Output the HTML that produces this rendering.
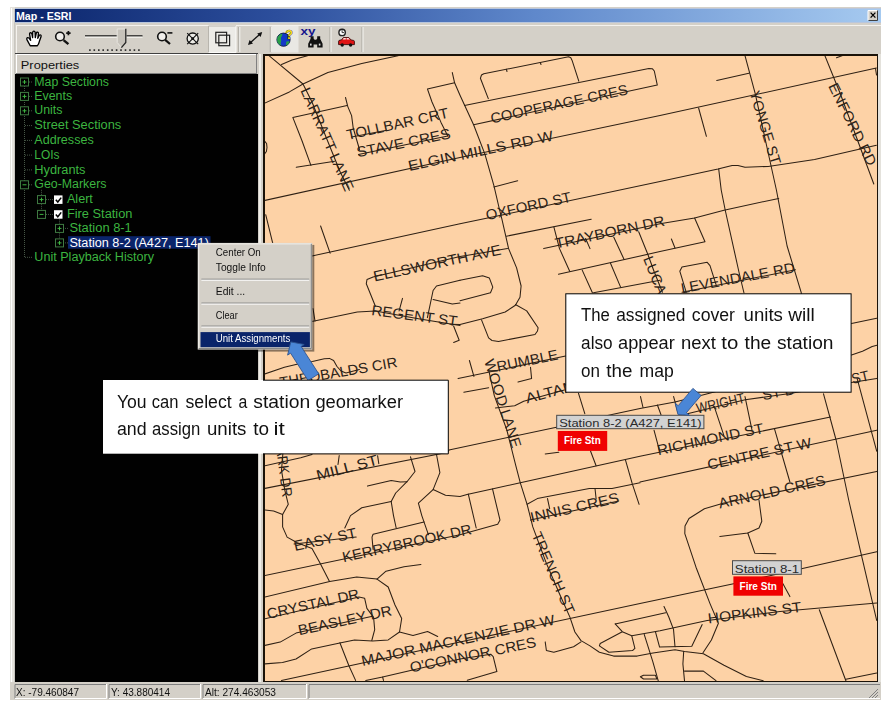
<!DOCTYPE html>
<html><head><meta charset="utf-8"><title>Map - ESRI</title>
<style>html,body{margin:0;padding:0;background:#fff;width:889px;height:707px;overflow:hidden}svg{display:block;position:absolute;left:0;top:0;will-change:opacity;opacity:.999}text{font-family:"Liberation Sans",sans-serif}.ml{font-size:14.5px;fill:#2b2218}.rd{fill:none;stroke:#2e2014;stroke-width:1.05;stroke-linejoin:round;stroke-linecap:round}</style></head><body>
<svg width="889" height="707" viewBox="0 0 889 707">
<rect x="10" y="7" width="871" height="693" fill="#d4d0c8"/>
<rect x="10" y="7" width="5" height="693" fill="#e4e2dc"/>
<rect x="11" y="8" width="1" height="691" fill="#ffffff"/>
<rect x="14" y="9" width="1" height="690" fill="#c8c6c0"/>
<defs><linearGradient id="tg" x1="0" x2="1" y1="0" y2="0"><stop offset="0" stop-color="#0a246a"/><stop offset="0.3" stop-color="#2c4e9c"/><stop offset="0.6" stop-color="#5f88cb"/><stop offset="1" stop-color="#a6caf0"/></linearGradient></defs>
<rect x="15" y="8" width="866" height="15" fill="#b9c6dc"/>
<rect x="15" y="9" width="866" height="13" fill="url(#tg)"/>
<text x="16.0" y="20.0" font-size="11" fill="#fff" font-weight="bold" textLength="55.5" lengthAdjust="spacingAndGlyphs" >Map - ESRI</text>
<rect x="868" y="10" width="10" height="10" fill="#d4d0c8"/>
<path d="M868 20.5V10.5H877.5" stroke="#fff" fill="none"/>
<path d="M868.5 20.5H877.5V10.5" stroke="#404040" fill="none"/>
<path d="M870.6 12.6L875.4 17.6M875.4 12.6L870.6 17.6" stroke="#000" stroke-width="1.3" fill="none"/>
<rect x="15" y="23" width="866" height="2" fill="#d4d0c8"/>
<rect x="16" y="25" width="865" height="1" fill="#f4f2ee"/>
<rect x="16" y="25" width="1" height="28" fill="#f4f2ee"/>
<g transform="translate(26,30.5)"><path d="M4.2 15.2 L1.2 9.6 Q0.2 7.6 1.6 7.2 Q2.8 7 3.8 8.6 L4.6 9.8 L3.6 3.6 Q3.5 2.2 4.6 2.2 Q5.6 2.2 5.9 3.4 L6.6 7 L6.7 1.8 Q6.8 0.6 7.9 0.6 Q9 0.6 9.1 1.8 L9.3 7 L10.3 2.6 Q10.6 1.5 11.6 1.7 Q12.6 2 12.4 3.2 L11.8 7.8 L13.2 5 Q13.8 4 14.7 4.5 Q15.4 5 15 6.2 L13.4 10.8 Q12.8 13.4 11.4 15.2 Z" fill="#fff" stroke="#000" stroke-width="1.35" stroke-linejoin="round"/></g>
<circle cx="60" cy="36.5" r="4.3" fill="#f0eeea" stroke="#111" stroke-width="1.6"/>
<path d="M63.6 40.2L68.4 44.2" stroke="#111" stroke-width="2.4" fill="none"/>
<path d="M66.2 33.1H70.6M68.4 30.9V35.3" stroke="#111" stroke-width="1.7" fill="none"/>
<rect x="85" y="35.2" width="57.5" height="1.4" fill="#222"/>
<rect x="85" y="36.6" width="57.5" height="1.2" fill="#f6f4f0"/>
<g fill="#222">
<rect x="89.1" y="49.3" width="1.6" height="1.6"/>
<rect x="93.5" y="49.3" width="1.6" height="1.6"/>
<rect x="98.0" y="49.3" width="1.6" height="1.6"/>
<rect x="102.4" y="49.3" width="1.6" height="1.6"/>
<rect x="106.9" y="49.3" width="1.6" height="1.6"/>
<rect x="111.3" y="49.3" width="1.6" height="1.6"/>
<rect x="115.8" y="49.3" width="1.6" height="1.6"/>
<rect x="120.2" y="49.3" width="1.6" height="1.6"/>
<rect x="124.7" y="49.3" width="1.6" height="1.6"/>
<rect x="129.2" y="49.3" width="1.6" height="1.6"/>
<rect x="133.6" y="49.3" width="1.6" height="1.6"/>
<rect x="138.1" y="49.3" width="1.6" height="1.6"/>
</g>
<path d="M117.2 29H126V42.5L121.6 47.5L117.2 42.5Z" fill="#c6c2ba" stroke="#e8e6e0" stroke-width="1"/>
<path d="M125.8 28.8V42.5L121.4 47.6" fill="none" stroke="#222" stroke-width="1.3"/>
<circle cx="162" cy="36.5" r="4.3" fill="#f0eeea" stroke="#111" stroke-width="1.6"/>
<path d="M165.2 39.8L170 44" stroke="#111" stroke-width="2.2" fill="none"/>
<path d="M167.4 32.9H172.4" stroke="#111" stroke-width="1.6" fill="none"/>
<circle cx="192.7" cy="38.6" r="5.6" fill="#ecebe6" stroke="#111" stroke-width="1.3"/>
<path d="M187.2 33.1L198.2 44.1M198.2 33.1L187.2 44.1" stroke="#111" stroke-width="1.1" fill="none"/>
<circle cx="192.7" cy="38.6" r="1.4" fill="#111"/>
<rect x="208.5" y="26" width="27.5" height="26.5" fill="#ecebe7"/>
<path d="M208.5 52.5V26H236" stroke="#b8b5ae" fill="none"/>
<path d="M208.5 52.5H236V26" stroke="#fbfaf8" fill="none"/>
<rect x="215.8" y="32.3" width="10.8" height="10.5" fill="none" stroke="#222" stroke-width="1.2"/>
<rect x="218.8" y="35.2" width="10.8" height="10.5" fill="none" stroke="#222" stroke-width="1.2"/>
<rect x="238.3" y="27" width="1" height="25" fill="#a8a59e"/>
<rect x="239.3" y="27" width="1" height="25" fill="#f6f5f2"/>
<rect x="269.8" y="27" width="1" height="25" fill="#a8a59e"/>
<rect x="270.8" y="27" width="1" height="25" fill="#f6f5f2"/>
<rect x="329.5" y="27" width="1" height="25" fill="#a8a59e"/>
<rect x="330.5" y="27" width="1" height="25" fill="#f6f5f2"/>
<rect x="361.5" y="27" width="1" height="25" fill="#a8a59e"/>
<rect x="362.5" y="27" width="1" height="25" fill="#f6f5f2"/>
<path d="M249.2 43.8L261 33.2" stroke="#111" stroke-width="1.3" fill="none"/>
<path d="M262.2 32L257.2 33.6L260.6 37Z" fill="#111"/>
<path d="M248 45L253 43.4L249.6 40Z" fill="#111"/>
<rect x="271.5" y="26" width="27" height="26.5" fill="#e9e8e4"/>
<circle cx="283.5" cy="39.7" r="6.6" fill="#1438c8" stroke="#0a1440" stroke-width="0.9"/>
<path d="M277.6 37q1.6-3 4.6-3.6q0.6 1.6-0.6 3q-1 1.2-0.6 2.8q0.6 1.6-0.2 3.4q-0.6 1.6 0.6 3.2q-3.2-0.8-4.2-4.2q-0.4-2.4 0.4-4.6z" fill="#2aa048"/>
<path d="M286.4 41.4q1.8-0.6 3.2 0.2q-0.8 2.8-3.2 4q-0.8-2-0-4.2z" fill="#2aa048"/>
<text x="285.4" y="38.8" font-size="12" font-weight="bold" fill="#f4d818" stroke="#2a2200" stroke-width="0.7" paint-order="stroke">?</text>
<text x="300.6" y="35" font-size="10" font-weight="bold" fill="#14148c" textLength="15" lengthAdjust="spacingAndGlyphs">xy</text>
<path d="M310.6 36.2h3v2.2l1 1.4h1.6l1-1.4v-2.2h3v2.6l2.4 5v3.6h-5.4v-3h-3.6v3h-5.4v-3.6l2.4-5z" fill="#111"/>
<rect x="310" y="43.6" width="1.6" height="2" fill="#ddd"/><rect x="318.8" y="43.6" width="1.6" height="2" fill="#ddd"/>
<circle cx="342.1" cy="32.4" r="3.2" fill="#fff" stroke="#222" stroke-width="1.4"/>
<path d="M342.1 30.2V32.6H344" stroke="#222" stroke-width="0.9" fill="none"/>
<path d="M338.6 44.6v-3.4q0-0.8 1.4-1l1.6-0.4l1.8-2.2h5.4l2.4 2.4l2.2 0.4q1 0.2 1 1v3.2z" fill="#e01414" stroke="#3a0808" stroke-width="0.9"/>
<path d="M342.6 39.6l1.2-1.5h2v1.5zM346.6 38.1h1.8l1.4 1.5h-3.2z" fill="#ffe0e0"/>
<circle cx="342.2" cy="45" r="1.7" fill="#111"/><circle cx="350.6" cy="45" r="1.7" fill="#111"/>
<rect x="15" y="53" width="243" height="1" fill="#404040"/>
<rect x="16" y="54" width="241" height="20" fill="#d4d0c8"/>
<rect x="16" y="54" width="241" height="1" fill="#fff"/>
<rect x="16" y="54" width="1" height="20" fill="#fff"/>
<rect x="16" y="73" width="241" height="1" fill="#808080"/>
<rect x="256" y="54" width="1" height="20" fill="#808080"/>
<text x="20.8" y="69.0" font-size="11.5" fill="#111" textLength="58.5" lengthAdjust="spacingAndGlyphs" >Properties</text>
<rect x="15" y="74" width="243" height="608" fill="#000"/>
<g stroke="#465646" stroke-width="1" stroke-dasharray="1,1" fill="none">
<path d="M24.5 82.0V257.3"/>
<path d="M25 82.0H33"/>
<path d="M25 96.4H33"/>
<path d="M25 110.8H33"/>
<path d="M25 125.6H33"/>
<path d="M25 140.4H33"/>
<path d="M25 155.1H33"/>
<path d="M25 169.9H33"/>
<path d="M25 184.8H33"/>
<path d="M25 257.3H33"/>
<path d="M41.5 189.8V214.4"/>
<path d="M46 199.6H53"/>
<path d="M46 214.4H53"/>
<path d="M59.5 219.4V242.9"/>
<path d="M63 228.4H68"/>
<path d="M63 242.9H68"/>
</g>
<rect x="20.5" y="78.0" width="8" height="8" fill="#000" stroke="#3f7a42"/><path d="M22.5 82.0h4" stroke="#3db540"/><path d="M24.5 80.0v4" stroke="#3db540"/>
<rect x="20.5" y="92.4" width="8" height="8" fill="#000" stroke="#3f7a42"/><path d="M22.5 96.4h4" stroke="#3db540"/><path d="M24.5 94.4v4" stroke="#3db540"/>
<rect x="20.5" y="106.8" width="8" height="8" fill="#000" stroke="#3f7a42"/><path d="M22.5 110.8h4" stroke="#3db540"/><path d="M24.5 108.8v4" stroke="#3db540"/>
<rect x="20.5" y="180.8" width="8" height="8" fill="#000" stroke="#3f7a42"/><path d="M22.5 184.8h4" stroke="#3db540"/>
<rect x="37.5" y="195.6" width="8" height="8" fill="#000" stroke="#3f7a42"/><path d="M39.5 199.6h4" stroke="#3db540"/><path d="M41.5 197.6v4" stroke="#3db540"/>
<rect x="37.5" y="210.4" width="8" height="8" fill="#000" stroke="#3f7a42"/><path d="M39.5 214.4h4" stroke="#3db540"/>
<rect x="55.5" y="224.4" width="8" height="8" fill="#000" stroke="#3f7a42"/><path d="M57.5 228.4h4" stroke="#3db540"/><path d="M59.5 226.4v4" stroke="#3db540"/>
<rect x="55.5" y="238.9" width="8" height="8" fill="#000" stroke="#3f7a42"/><path d="M57.5 242.9h4" stroke="#3db540"/><path d="M59.5 240.9v4" stroke="#3db540"/>
<rect x="54" y="195.4" width="8.5" height="8.5" fill="#fff"/>
<path d="M55.8 199.8l2 2.2l3.4-4.4" stroke="#000" stroke-width="1.5" fill="none"/>
<rect x="54" y="210.2" width="8.5" height="8.5" fill="#fff"/>
<path d="M55.8 214.6l2 2.2l3.4-4.4" stroke="#000" stroke-width="1.5" fill="none"/>
<rect x="68" y="236.2" width="142.5" height="12.5" fill="#0a246a"/>
<text x="34.3" y="85.6" font-size="12" fill="#3db540" textLength="74.7" lengthAdjust="spacingAndGlyphs" >Map Sections</text>
<text x="34.3" y="100.0" font-size="12" fill="#3db540" textLength="37.8" lengthAdjust="spacingAndGlyphs" >Events</text>
<text x="34.3" y="114.4" font-size="12" fill="#3db540" textLength="28.2" lengthAdjust="spacingAndGlyphs" >Units</text>
<text x="34.3" y="129.2" font-size="12" fill="#3db540" textLength="86.9" lengthAdjust="spacingAndGlyphs" >Street Sections</text>
<text x="34.3" y="144.0" font-size="12" fill="#3db540" textLength="59.4" lengthAdjust="spacingAndGlyphs" >Addresses</text>
<text x="34.3" y="158.7" font-size="12" fill="#3db540" textLength="25.2" lengthAdjust="spacingAndGlyphs" >LOIs</text>
<text x="34.3" y="173.5" font-size="12" fill="#3db540" textLength="51.2" lengthAdjust="spacingAndGlyphs" >Hydrants</text>
<text x="34.3" y="188.4" font-size="12" fill="#3db540" textLength="72.2" lengthAdjust="spacingAndGlyphs" >Geo-Markers</text>
<text x="66.9" y="203.2" font-size="12" fill="#3db540" textLength="26.0" lengthAdjust="spacingAndGlyphs" >Alert</text>
<text x="66.9" y="218.0" font-size="12" fill="#3db540" textLength="65.6" lengthAdjust="spacingAndGlyphs" >Fire Station</text>
<text x="69.4" y="232.0" font-size="12" fill="#3db540" textLength="62.4" lengthAdjust="spacingAndGlyphs" >Station 8-1</text>
<text x="34.3" y="260.9" font-size="12" fill="#3db540" textLength="119.7" lengthAdjust="spacingAndGlyphs" >Unit Playback History</text>
<text x="69.4" y="246.5" font-size="12" fill="#fff" textLength="139.5" lengthAdjust="spacingAndGlyphs" >Station 8-2 (A427, E141)</text>
<rect x="258" y="54" width="5" height="628" fill="#d4d0c8"/>
<rect x="259" y="54" width="2" height="628" fill="#f0eee8"/>
<rect x="263" y="54" width="615" height="628" fill="#1a1208"/>
<rect x="265" y="56" width="612" height="625" fill="#fdd2a6"/>
<clipPath id="mc"><rect x="265" y="56" width="612" height="625"/></clipPath>
<g clip-path="url(#mc)">
<g class="rd">
<polyline points="269.0,55.7 303.0,84.0 312.0,102.0 325.6,136.0 340.3,172.2 349.4,190.3"/>
<polyline points="281.5,64.5 292.0,60.0 307.5,55.7"/>
<polyline points="264.5,103.2 289.4,91.9 303.0,84.0 327.9,72.6 361.8,63.6 398.0,55.7"/>
<polyline points="347.1,105.4 292.8,117.4 301.9,140.5 310.9,165.4"/>
<polyline points="296.2,167.2 334.7,161.3"/>
<polyline points="345.5,97.5 347.8,106.6 351.6,115.6 353.2,128.0 359.5,149.5"/>
<polyline points="351.6,137.1 386.7,130.3"/>
<polyline points="358.4,154.5 447.8,136.0"/>
<polyline points="452.3,72.6 454.6,82.8 460.0,95.2 473.6,124.7 484.9,154.1 493.9,185.7 499.6,210.0 501.9,219.2 508.6,248.6 516.6,267.9 521.1,286.0 520.0,297.3 515.4,305.2 505.2,312.0 482.6,318.8 460.0,324.5 450.0,324.2"/>
<polyline points="454.6,82.8 427.4,88.9 432.0,102.0 441.0,122.4 447.8,136.0"/>
<polyline points="264.5,200.5 460.0,157.5 660.0,115.6 876.4,68.0"/>
<polyline points="488.3,98.6 480.4,78.3 481.5,75.0 483.8,73.8 568.6,56.8 570.8,57.8 572.0,60.2 578.8,81.2"/>
<polyline points="506.4,69.3 507.0,71.5"/>
<polyline points="540.3,62.5 541.0,64.5"/>
<polyline points="464.5,105.4 648.9,68.6 652.5,68.8 654.3,71.0 657.3,85.1 473.6,124.7"/>
<polyline points="493.9,186.9 517.7,180.8"/>
<polyline points="264.5,266.2 314.3,255.4 460.0,223.8 498.5,215.8 660.0,181.4 718.0,169.0 732.1,165.4 738.0,165.6 745.0,167.2 768.2,166.4 814.6,159.5 876.4,145.3"/>
<polyline points="745.0,55.7 755.3,93.8 768.2,153.0 776.4,190.0 787.1,246.0 801.1,292.2 806.0,315.0"/>
<polyline points="716.7,80.4 748.9,73.2"/>
<polyline points="698.6,108.0 706.4,136.3"/>
<polyline points="718.7,169.0 721.2,190.0 725.4,211.0 739.4,274.0 744.0,293.0"/>
<polyline points="824.9,55.7 840.3,93.8 873.8,184.0"/>
<polyline points="836.5,57.7 844.0,55.0"/>
<polyline points="875.5,68.5 876.5,75.0"/>
<polyline points="264.5,141.0 266.6,143.5 267.0,147.5 266.4,151.5 264.5,154.0"/>
<polyline points="265.7,214.7 272.4,241.9 275.0,252.0"/>
<polyline points="320.6,226.0 330.1,253.2"/>
<polyline points="375.4,306.3 366.3,283.7 367.0,279.5 373.1,276.9 460.0,256.6 507.5,248.6"/>
<polyline points="264.5,331.0 314.3,321.0 357.3,312.0 375.4,310.9 418.4,318.8 460.0,325.6"/>
<polyline points="313.0,308.6 315.0,321.0"/>
<polyline points="402.5,298.4 399.1,310.9"/>
<polyline points="460.0,280.3 436.5,286.0 433.1,290.5 427.4,317.6"/>
<polyline points="433.1,299.5 452.3,304.1 460.0,303.0"/>
<polyline points="453.6,326.0 459.2,340.2 453.6,342.4"/>
<polyline points="460.0,280.3 482.6,275.8 489.4,278.1 492.8,287.1 490.5,292.8 460.0,300.7"/>
<polyline points="515.4,304.5 526.7,310.9 538.1,327.8 537.5,331.0 535.0,334.5 498.5,341.4 492.0,340.5 488.6,337.9 481.5,319.9"/>
<polyline points="506.4,236.2 591.2,219.2"/>
<polyline points="543.7,248.6 660.0,223.8 694.6,218.0 724.0,210.2 778.7,198.4"/>
<polyline points="553.9,227.1 559.5,248.6 569.7,271.3"/>
<polyline points="558.4,274.2 660.0,251.6 705.0,241.8 694.6,218.0"/>
<polyline points="582.2,270.1 592.4,292.8"/>
<polyline points="610.5,263.3 620.6,287.1"/>
<polyline points="613.8,237.3 624.0,259.3"/>
<polyline points="593.5,292.8 660.0,280.3"/>
<polyline points="638.7,231.7 647.8,254.3 654.0,271.2 662.4,292.2"/>
<polyline points="585.6,238.5 590.0,248.6"/>
<polyline points="671.4,239.0 675.0,248.0"/>
<polyline points="686.2,292.2 679.8,271.2 682.0,267.0 707.2,262.3 710.0,265.6 716.2,285.2"/>
<polyline points="682.0,292.2 795.5,269.8"/>
<polyline points="264.5,374.1 284.4,367.3 298.0,363.9 312.4,361.4 324.3,358.8 329.4,358.4 333.6,360.5 337.0,366.5 341.0,371.0 346.0,373.0 359.4,369.5"/>
<polyline points="264.5,465.8 300.7,457.8 312.0,454.4"/>
<polyline points="264.5,488.5 447.8,452.3 449.0,449.9 556.5,427.3 612.0,414.5 640.0,408.5 675.0,402.0 705.6,394.3 716.0,391.5"/>
<polyline points="684.0,414.5 689.4,413.2 745.2,399.7 765.0,397.0 790.0,393.4 851.5,382.6 876.7,378.4"/>
<polyline points="851.5,323.6 876.7,318.3"/>
<polyline points="851.5,355.0 862.5,351.3 872.2,346.5 877.0,345.3"/>
<polyline points="339.2,455.6 338.0,464.5"/>
<polyline points="367.5,486.1 391.2,480.4 400.3,482.0 407.0,481.7"/>
<polyline points="458.1,378.6 565.6,356.0"/>
<polyline points="469.4,360.5 473.9,376.4"/>
<polyline points="463.8,392.2 488.6,387.7"/>
<polyline points="488.6,369.6 494.3,395.6 506.7,429.5 515.8,465.7 520.3,482.8 527.1,504.3 532.8,526.9 546.3,563.1 559.9,594.8 569.9,617.1 574.9,632.0 581.0,640.6 590.0,645.9 599.4,652.2 613.6,656.1 637.2,656.1 653.0,653.0 675.0,649.8 684.5,651.4 703.4,653.8 724.0,665.3 746.4,676.5 763.2,680.7"/>
<polyline points="530.5,367.3 531.6,378.6 518.0,382.0"/>
<polyline points="495.4,408.0 514.7,405.8 523.7,401.3 564.4,390.0"/>
<polyline points="578.5,393.3 584.8,413.7"/>
<polyline points="545.2,454.0 558.8,452.2"/>
<polyline points="590.5,451.0 596.1,465.7"/>
<polyline points="433.1,489.6 445.5,495.2 460.0,496.4 467.0,494.5 492.0,488.9 520.3,482.8 640.0,456.2 830.5,417.0"/>
<polyline points="625.5,460.1 632.3,483.9 639.1,504.3"/>
<polyline points="640.0,482.0 876.7,430.2"/>
<polyline points="876.7,471.4 724.0,503.0 704.4,508.7 689.0,518.5 685.0,526.0 684.8,533.6 696.0,567.2 710.0,603.6 718.4,623.2 711.4,640.0 703.0,652.7"/>
<polyline points="759.0,500.3 761.8,521.3 759.0,528.0 747.8,533.0 719.8,536.4"/>
<polyline points="747.8,533.0 754.8,553.2 775.8,553.8"/>
<polyline points="823.5,393.8 836.1,440.0 848.7,500.0 861.3,554.6 876.7,620.4"/>
<polyline points="857.1,378.4 876.7,451.2"/>
<polyline points="774.5,428.8 789.9,482.0"/>
<polyline points="745.0,396.6 752.0,430.2"/>
<polyline points="714.2,406.4 724.0,435.8"/>
<polyline points="673.6,396.6 677.8,412.0"/>
<polyline points="654.0,430.2 659.6,451.2"/>
<polyline points="657.4,405.0 661.0,414.8"/>
<polyline points="640.5,396.6 643.0,407.5"/>
<polyline points="283.0,452.0 281.5,470.4 284.9,490.7 288.3,504.3 282.6,514.5 282.6,526.9 287.1,537.1 297.3,542.8 312.0,548.4 320.0,563.1 329.5,581.5"/>
<polyline points="264.5,510.0 273.6,511.1 282.6,514.5"/>
<polyline points="294.0,543.9 356.2,537.1"/>
<polyline points="344.8,528.0 350.5,515.6 361.8,507.7 391.2,501.6"/>
<polyline points="391.2,501.6 393.5,515.6 396.2,528.0"/>
<polyline points="391.2,501.6 395.7,493.0 407.0,481.7 415.0,471.5 410.5,456.8"/>
<polyline points="436.5,454.5 439.9,472.6 433.1,489.6 418.4,503.2 421.8,515.6 428.5,534.8"/>
<polyline points="424.0,521.9 373.1,534.2 372.0,537.1 373.1,549.5"/>
<polyline points="264.5,575.6 460.0,534.8 497.7,524.2 500.0,520.1 492.5,488.9"/>
<polyline points="468.3,494.1 476.2,528.0"/>
<polyline points="264.5,597.1 329.7,581.4 356.7,576.9 377.0,579.1 388.2,587.0 395.0,605.0 401.7,618.5 399.5,632.0 388.2,639.9 372.5,641.0 354.5,639.9 341.0,642.8 311.7,648.9 296.0,659.0 282.5,662.4 264.5,663.9"/>
<polyline points="377.0,579.1 386.0,571.2 404.0,566.7 420.9,564.5"/>
<polyline points="377.6,455.7 378.8,463.6"/>
<polyline points="527.1,504.3 537.3,498.6 589.3,488.5 612.0,488.5 640.0,482.8"/>
<polyline points="530.5,520.1 618.7,500.9"/>
<polyline points="547.5,498.6 549.7,508.8"/>
<polyline points="595.0,488.5 596.1,498.6"/>
<polyline points="264.5,618.9 359.0,597.1 364.6,598.2 366.9,608.4 373.6,617.4 374.7,629.7 371.8,640.5"/>
<polyline points="264.5,645.5 280.2,642.1 296.0,633.1 372.5,616.2"/>
<polyline points="399.5,632.0 413.0,635.4 427.6,631.5 437.7,636.5"/>
<polyline points="281.4,680.4 460.0,642.1 640.0,603.5 732.4,584.0 802.5,568.6 876.7,551.8"/>
<polyline points="339.9,642.8 348.9,665.7 355.6,680.4"/>
<polyline points="365.7,680.4 382.6,677.0 460.0,659.0 490.7,654.2 493.2,656.7 496.9,671.6 467.2,680.2"/>
<polyline points="382.6,677.0 383.5,680.4"/>
<polyline points="545.2,641.9 546.4,650.5 553.8,652.3 573.6,646.8 581.0,641.9"/>
<polyline points="615.2,623.9 665.6,612.8"/>
<polyline points="664.0,606.5 668.7,616.8 673.5,629.4 675.0,646.7"/>
<polyline points="615.2,623.9 622.3,631.7 600.2,643.5 599.4,645.9 608.9,652.2 632.5,650.6 634.9,648.3 631.7,635.7 622.3,631.7"/>
<polyline points="631.8,635.7 660.0,630.7 707.2,620.4 780.0,611.5 876.7,603.1"/>
<polyline points="644.2,634.4 652.8,661.7 658.2,680.7"/>
<polyline points="655.4,631.7 659.6,647.1 691.8,646.2 702.2,624.6"/>
<polyline points="683.7,651.4 682.9,664.0 684.5,680.6"/>
<polyline points="684.5,671.1 703.4,671.1 716.0,680.6"/>
<polyline points="640.4,676.8 643.5,675.2 655.4,675.2 656.9,679.0 643.5,679.0 640.4,676.8"/>
<polyline points="782.8,583.5 789.9,596.6"/>
<polyline points="819.3,609.8 845.9,680.7"/>
<polyline points="845.9,679.3 876.7,673.1"/>
</g>
<text class="ml" style="font-size:14.5px" transform="translate(300.2,90.3) rotate(66.2)" textLength="111.5" lengthAdjust="spacingAndGlyphs">LARRATT LANE</text>
<text class="ml" style="font-size:14.5px" transform="translate(347.8,139.9) rotate(-12.4)" textLength="103.9" lengthAdjust="spacingAndGlyphs">TOLLBAR CRT</text>
<text class="ml" style="font-size:14.5px" transform="translate(357.7,157.3) rotate(-11.6)" textLength="95.5" lengthAdjust="spacingAndGlyphs">STAVE CRES</text>
<text class="ml" style="font-size:14.5px" transform="translate(491.7,123.4) rotate(-12.1)" textLength="139.9" lengthAdjust="spacingAndGlyphs">COOPERAGE CRES</text>
<text class="ml" style="font-size:14.5px" transform="translate(409.3,170.9) rotate(-11.9)" textLength="147.8" lengthAdjust="spacingAndGlyphs">ELGIN MILLS RD W</text>
<text class="ml" style="font-size:14.5px" transform="translate(749.5,92.5) rotate(73.2)" textLength="76.2" lengthAdjust="spacingAndGlyphs">YONGE ST</text>
<text class="ml" style="font-size:14.5px" transform="translate(828.0,86.0) rotate(63.7)" textLength="90.3" lengthAdjust="spacingAndGlyphs">ENFORD RD</text>
<text class="ml" style="font-size:14.5px" transform="translate(487.1,220.2) rotate(-12.4)" textLength="86.9" lengthAdjust="spacingAndGlyphs">OXFORD ST</text>
<text class="ml" style="font-size:14.5px" transform="translate(374.5,281.4) rotate(-12.0)" textLength="130.2" lengthAdjust="spacingAndGlyphs">ELLSWORTH AVE</text>
<text class="ml" style="font-size:14.5px" transform="translate(370.9,314.9) rotate(7.5)" textLength="86.6" lengthAdjust="spacingAndGlyphs">REGENT ST</text>
<text class="ml" style="font-size:14.5px" transform="translate(556.2,248.6) rotate(-12.0)" textLength="111.7" lengthAdjust="spacingAndGlyphs">TRAYBORN DR</text>
<text class="ml" style="font-size:14.5px" transform="translate(682.0,293.4) rotate(-10.5)" textLength="115.4" lengthAdjust="spacingAndGlyphs">LEVENDALE RD</text>
<text class="ml" style="font-size:14.5px" transform="translate(643.0,258.5) rotate(68.3)" textLength="50.0" lengthAdjust="spacingAndGlyphs">LUCAS</text>
<text class="ml" style="font-size:14.5px" transform="translate(280.5,387.4) rotate(-9.9)" textLength="119.2" lengthAdjust="spacingAndGlyphs">THEOBALDS CIR</text>
<text class="ml" style="font-size:14.5px" transform="translate(497.7,371.7) rotate(-11.5)" textLength="62.3" lengthAdjust="spacingAndGlyphs">RUMBLE</text>
<text class="ml" style="font-size:14.5px" transform="translate(484.0,361.0) rotate(72.3)" textLength="92.3" lengthAdjust="spacingAndGlyphs">WOOD LANE</text>
<text class="ml" style="font-size:14.5px" transform="translate(527.1,403.4) rotate(-14.9)" textLength="106.5" lengthAdjust="spacingAndGlyphs">ALTAMIRA RD</text>
<text class="ml" style="font-size:14.5px" transform="translate(317.7,480.6) rotate(-14.9)" textLength="63.2" lengthAdjust="spacingAndGlyphs">MILL ST</text>
<text class="ml" style="font-size:14.5px" transform="translate(275.0,440.0) rotate(82.6)" textLength="58.0" lengthAdjust="spacingAndGlyphs">PARK DR</text>
<text class="ml" style="font-size:14.5px" transform="translate(697.5,413.6) rotate(-13.0)" textLength="49.3" lengthAdjust="spacingAndGlyphs">WRIGHT</text>
<text class="ml" style="font-size:14.5px" transform="translate(763.2,400.2) rotate(-11.0)" textLength="33.0" lengthAdjust="spacingAndGlyphs">ST D</text>
<text class="ml" style="font-size:14.5px" transform="translate(852.8,384.0) rotate(-13.2)" textLength="17.5" lengthAdjust="spacingAndGlyphs">ST</text>
<text class="ml" style="font-size:14.5px" transform="translate(658.2,455.2) rotate(-11.9)" textLength="108.7" lengthAdjust="spacingAndGlyphs">RICHMOND ST</text>
<text class="ml" style="font-size:14.5px" transform="translate(708.6,469.8) rotate(-12.2)" textLength="106.1" lengthAdjust="spacingAndGlyphs">CENTRE ST W</text>
<text class="ml" style="font-size:14.5px" transform="translate(719.8,508.5) rotate(-12.6)" textLength="109.1" lengthAdjust="spacingAndGlyphs">ARNOLD CRES</text>
<text class="ml" style="font-size:14.5px" transform="translate(295.0,551.0) rotate(-12.3)" textLength="63.8" lengthAdjust="spacingAndGlyphs">EASY ST</text>
<text class="ml" style="font-size:14.5px" transform="translate(343.4,562.2) rotate(-12.4)" textLength="132.2" lengthAdjust="spacingAndGlyphs">KERRYBROOK DR</text>
<text class="ml" style="font-size:14.5px" transform="translate(531.6,522.6) rotate(-13.0)" textLength="90.6" lengthAdjust="spacingAndGlyphs">INNIS CRES</text>
<text class="ml" style="font-size:14.5px" transform="translate(531.5,534.5) rotate(66.8)" textLength="87.6" lengthAdjust="spacingAndGlyphs">TRENCH ST</text>
<text class="ml" style="font-size:14.5px" transform="translate(708.6,623.4) rotate(-7.1)" textLength="94.0" lengthAdjust="spacingAndGlyphs">HOPKINS ST</text>
<text class="ml" style="font-size:14.5px" transform="translate(267.9,618.9) rotate(-12.4)" textLength="94.4" lengthAdjust="spacingAndGlyphs">CRYSTAL DR</text>
<text class="ml" style="font-size:14.5px" transform="translate(299.2,635.3) rotate(-12.2)" textLength="95.6" lengthAdjust="spacingAndGlyphs">BEASLEY DR</text>
<text class="ml" style="font-size:14.5px" transform="translate(362.4,666.1) rotate(-12.2)" textLength="197.7" lengthAdjust="spacingAndGlyphs">MAJOR MACKENZIE DR W</text>
<text class="ml" style="font-size:14.5px" transform="translate(411.0,672.6) rotate(-11.6)" textLength="128.6" lengthAdjust="spacingAndGlyphs">O&#39;CONNOR CRES</text>
</g>
<rect x="556.7" y="415.3" width="147.2" height="13.4" fill="#d2d2d2" stroke="#4a4a4a" stroke-width="1"/>
<text x="559.2" y="426.8" font-size="10.5" fill="#2a2a2a" textLength="142.4" lengthAdjust="spacingAndGlyphs" >Station 8-2 (A427, E141)</text>
<rect x="557.8" y="431.0" width="49.4" height="19.9" fill="#f00000"/>
<text x="563.9" y="444.4" font-size="10.5" fill="#fff" font-weight="bold" textLength="36.8" lengthAdjust="spacingAndGlyphs" >Fire Stn</text>
<rect x="732.5" y="560.7" width="68.8" height="13.6" fill="#d2d2d2" stroke="#4a4a4a" stroke-width="1"/>
<text x="734.8" y="572.5" font-size="10.5" fill="#2a2a2a" textLength="64.4" lengthAdjust="spacingAndGlyphs" >Station 8-1</text>
<rect x="733.4" y="576.4" width="49.6" height="19.3" fill="#f00000"/>
<text x="739.5" y="589.6" font-size="10.5" fill="#fff" font-weight="bold" textLength="37.4" lengthAdjust="spacingAndGlyphs" >Fire Stn</text>
<rect x="199.7" y="244.9" width="114.6" height="106.7" fill="#000" opacity="0.45"/>
<rect x="197.7" y="242.9" width="114.6" height="106.7" fill="#d4d0c8"/>
<path d="M198.7 348.6V243.9H311.3" stroke="#f2f0ec" fill="none"/>
<path d="M198.7 348.6H311.3V243.9" stroke="#808080" fill="none"/>
<rect x="201.4" y="278.7" width="107.8" height="1" fill="#808080"/>
<rect x="201.4" y="279.7" width="107.8" height="1" fill="#fff"/>
<rect x="201.4" y="302.6" width="107.8" height="1" fill="#808080"/>
<rect x="201.4" y="303.6" width="107.8" height="1" fill="#fff"/>
<rect x="201.4" y="325.6" width="107.8" height="1" fill="#808080"/>
<rect x="201.4" y="326.6" width="107.8" height="1" fill="#fff"/>
<rect x="200.5" y="332.1" width="109.4" height="15.1" fill="#0a246a"/>
<text x="215.8" y="255.8" font-size="10.5" fill="#111" textLength="45.0" lengthAdjust="spacingAndGlyphs" >Center On</text>
<text x="215.8" y="271.4" font-size="10.5" fill="#111" textLength="50.0" lengthAdjust="spacingAndGlyphs" >Toggle Info</text>
<text x="215.8" y="295.3" font-size="10.5" fill="#111" textLength="29.4" lengthAdjust="spacingAndGlyphs" >Edit ...</text>
<text x="215.8" y="319.2" font-size="10.5" fill="#111" textLength="22.0" lengthAdjust="spacingAndGlyphs" >Clear</text>
<text x="215.8" y="342.2" font-size="10.5" fill="#fff" textLength="74.5" lengthAdjust="spacingAndGlyphs" >Unit Assignments</text>
<polygon points="318.7,373.8 301.1,346.4 304.2,344.5 290.8,341.9 287.6,355.1 290.6,353.2 308.1,380.6" fill="#4a86d6" stroke="#2f5590" stroke-width="0.9"/>
<rect x="103" y="380" width="345.3" height="73.7" fill="#fff"/>
<path d="M263 380.2H448.3V453.9H263" stroke="#000" fill="none"/>
<text x="116.9" y="408.0" font-size="17.5" fill="#111" textLength="29.7" lengthAdjust="spacingAndGlyphs" >You</text>
<text x="151.7" y="408.0" font-size="17.5" fill="#111" textLength="26.7" lengthAdjust="spacingAndGlyphs" >can</text>
<text x="185.5" y="408.0" font-size="17.5" fill="#111" textLength="46.2" lengthAdjust="spacingAndGlyphs" >select</text>
<text x="238.6" y="408.0" font-size="17.5" fill="#111" textLength="8.8" lengthAdjust="spacingAndGlyphs" >a</text>
<text x="253.3" y="408.0" font-size="17.5" fill="#111" textLength="56.9" lengthAdjust="spacingAndGlyphs" >station</text>
<text x="315.4" y="408.0" font-size="17.5" fill="#111" textLength="87.6" lengthAdjust="spacingAndGlyphs" >geomarker</text>
<text x="116.9" y="435.4" font-size="17.5" fill="#111" textLength="29.7" lengthAdjust="spacingAndGlyphs" >and</text>
<text x="152.1" y="435.4" font-size="17.5" fill="#111" textLength="48.2" lengthAdjust="spacingAndGlyphs" >assign</text>
<text x="207.0" y="435.4" font-size="17.5" fill="#111" textLength="39.4" lengthAdjust="spacingAndGlyphs" >units</text>
<text x="253.3" y="435.4" font-size="17.5" fill="#111" textLength="15.8" lengthAdjust="spacingAndGlyphs" >to</text>
<text x="273.6" y="435.4" font-size="17.5" fill="#111" textLength="11.3" lengthAdjust="spacingAndGlyphs" >it</text>
<rect x="565.8" y="293.8" width="285.3" height="98.4" fill="#fff" stroke="#000"/>
<polygon points="692.9,388.4 678.2,405.7 675.1,403.1 677.9,414.4 689.5,415.3 686.4,412.7 701.1,395.4" fill="#4a86d6" stroke="#2f5590" stroke-width="0.9"/>
<text x="581.1" y="320.6" font-size="17.5" fill="#111" textLength="28.8" lengthAdjust="spacingAndGlyphs" >The</text>
<text x="616.2" y="320.6" font-size="17.5" fill="#111" textLength="69.3" lengthAdjust="spacingAndGlyphs" >assigned</text>
<text x="691.8" y="320.6" font-size="17.5" fill="#111" textLength="43.2" lengthAdjust="spacingAndGlyphs" >cover</text>
<text x="743.6" y="320.6" font-size="17.5" fill="#111" textLength="39.3" lengthAdjust="spacingAndGlyphs" >units</text>
<text x="788.2" y="320.6" font-size="17.5" fill="#111" textLength="26.6" lengthAdjust="spacingAndGlyphs" >will</text>
<text x="581.1" y="349.3" font-size="17.5" fill="#111" textLength="31.5" lengthAdjust="spacingAndGlyphs" >also</text>
<text x="618.0" y="349.3" font-size="17.5" fill="#111" textLength="56.7" lengthAdjust="spacingAndGlyphs" >appear</text>
<text x="681.0" y="349.3" font-size="17.5" fill="#111" textLength="34.9" lengthAdjust="spacingAndGlyphs" >next</text>
<text x="721.3" y="349.3" font-size="17.5" fill="#111" textLength="17.0" lengthAdjust="spacingAndGlyphs" >to</text>
<text x="744.6" y="349.3" font-size="17.5" fill="#111" textLength="26.6" lengthAdjust="spacingAndGlyphs" >the</text>
<text x="777.0" y="349.3" font-size="17.5" fill="#111" textLength="56.5" lengthAdjust="spacingAndGlyphs" >station</text>
<text x="581.1" y="377.2" font-size="17.5" fill="#111" textLength="18.9" lengthAdjust="spacingAndGlyphs" >on</text>
<text x="606.3" y="377.2" font-size="17.5" fill="#111" textLength="26.1" lengthAdjust="spacingAndGlyphs" >the</text>
<text x="639.6" y="377.2" font-size="17.5" fill="#111" textLength="34.2" lengthAdjust="spacingAndGlyphs" >map</text>
<rect x="878" y="54" width="3" height="628" fill="#e4e2dc"/>
<rect x="10" y="682" width="871" height="18" fill="#d4d0c8"/>
<path d="M15 698.5V684.5H106" stroke="#808080" fill="none"/><path d="M15 698.5H106.5V684" stroke="#fff" fill="none"/>
<path d="M109 698.5V684.5H200" stroke="#808080" fill="none"/><path d="M109 698.5H200.5V684" stroke="#fff" fill="none"/>
<path d="M203 698.5V684.5H306" stroke="#808080" fill="none"/><path d="M203 698.5H306.5V684" stroke="#fff" fill="none"/>
<path d="M309 698.5V684.5H880" stroke="#808080" fill="none"/><path d="M309 698.5H880" stroke="#fff" fill="none"/>
<text x="16.0" y="696.0" font-size="10" fill="#111" textLength="63.0" lengthAdjust="spacingAndGlyphs" >X: -79.460847</text>
<text x="111.0" y="696.0" font-size="10" fill="#111" textLength="59.0" lengthAdjust="spacingAndGlyphs" >Y: 43.880414</text>
<text x="205.0" y="696.0" font-size="10" fill="#111" textLength="71.0" lengthAdjust="spacingAndGlyphs" >Alt: 274.463053</text>
<path d="M869 698L878 689M872 698L878 692M875 698L878 695" stroke="#808080" fill="none"/>
</svg></body></html>
